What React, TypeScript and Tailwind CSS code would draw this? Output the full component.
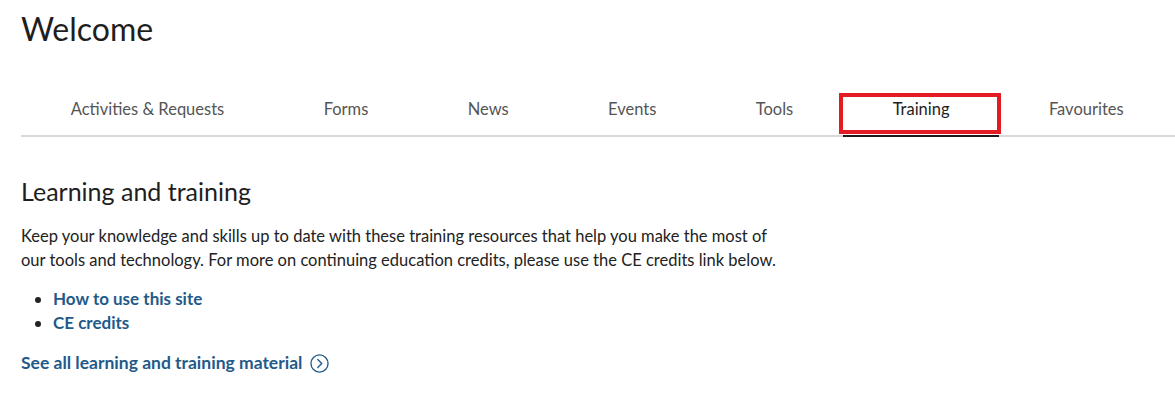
import React from "react";

const tabs = ["Activities & Requests", "Forms", "News", "Events", "Tools", "Training", "Favourites"];

const App = () => {
  return (
    <div className="min-h-screen bg-white pl-[21px] pt-[9px] text-[#222]" style={{ fontFamily: "Lato, 'Open Sans', sans-serif" }}>
      {/* Page title */}
      <h1 className="text-[32px] leading-[40px] text-[#1e1e1e]">Welcome</h1>

      {/* Tabs */}
      <nav className="mt-[39px] flex border-b-2 border-[#d9d9d9]">
        {tabs.map((t) => {
          const active = t === "Training";
          return (
            <div
              key={t}
              className={
                active
                  ? "relative -mb-[2px] shrink-0 border-b-2 border-[#1a1a1a] px-[49.7px] pb-[15px] pt-[10px] text-[16.5px] leading-[22px] text-[#1e1e1e]"
                  : "shrink-0 px-[49.7px] pb-[15px] pt-[10px] text-[16.5px] leading-[22px] text-[#555]"
              }
            >
              {t}
              {active && <span className="absolute -left-[4px] -right-[2px] top-[5px] bottom-[1px] border-4 border-[#e31b23]" />}
            </div>
          );
        })}
      </nav>

      {/* Learning and training */}
      <section className="mt-[38px] max-w-[770px]">
        <h2 className="text-[25px] leading-[32px] text-[#1e1e1e]">Learning and training</h2>
        <p className="mt-[17px] text-[16.5px] leading-[24px] text-[#222]">
          Keep your knowledge and skills up to date with these training resources that help you make the most of our tools and technology. For more on continuing education credits, please use the CE credits link below.
        </p>
        <ul className="mt-[15px] list-disc pl-[32px] text-[17px] leading-[24px] font-bold text-[#1f5a8a]">
          <li className="marker:text-[#222]">How to use this site</li>
          <li className="marker:text-[#222]">CE credits</li>
        </ul>
        <a className="mt-[16px] flex items-center gap-[8px] text-[17.5px] leading-[24px] font-bold text-[#1f5a8a]">
          See all learning and training material
          <svg width="19" height="19" viewBox="0 0 20 20" fill="none" stroke="#1f5a8a" strokeWidth="1.4">
            <circle cx="10" cy="10" r="9" />
            <path d="M8.2 5.8 L12.4 10 L8.2 14.2" strokeLinecap="round" strokeLinejoin="round" />
          </svg>
        </a>
      </section>
    </div>
  );
};

export default App;
